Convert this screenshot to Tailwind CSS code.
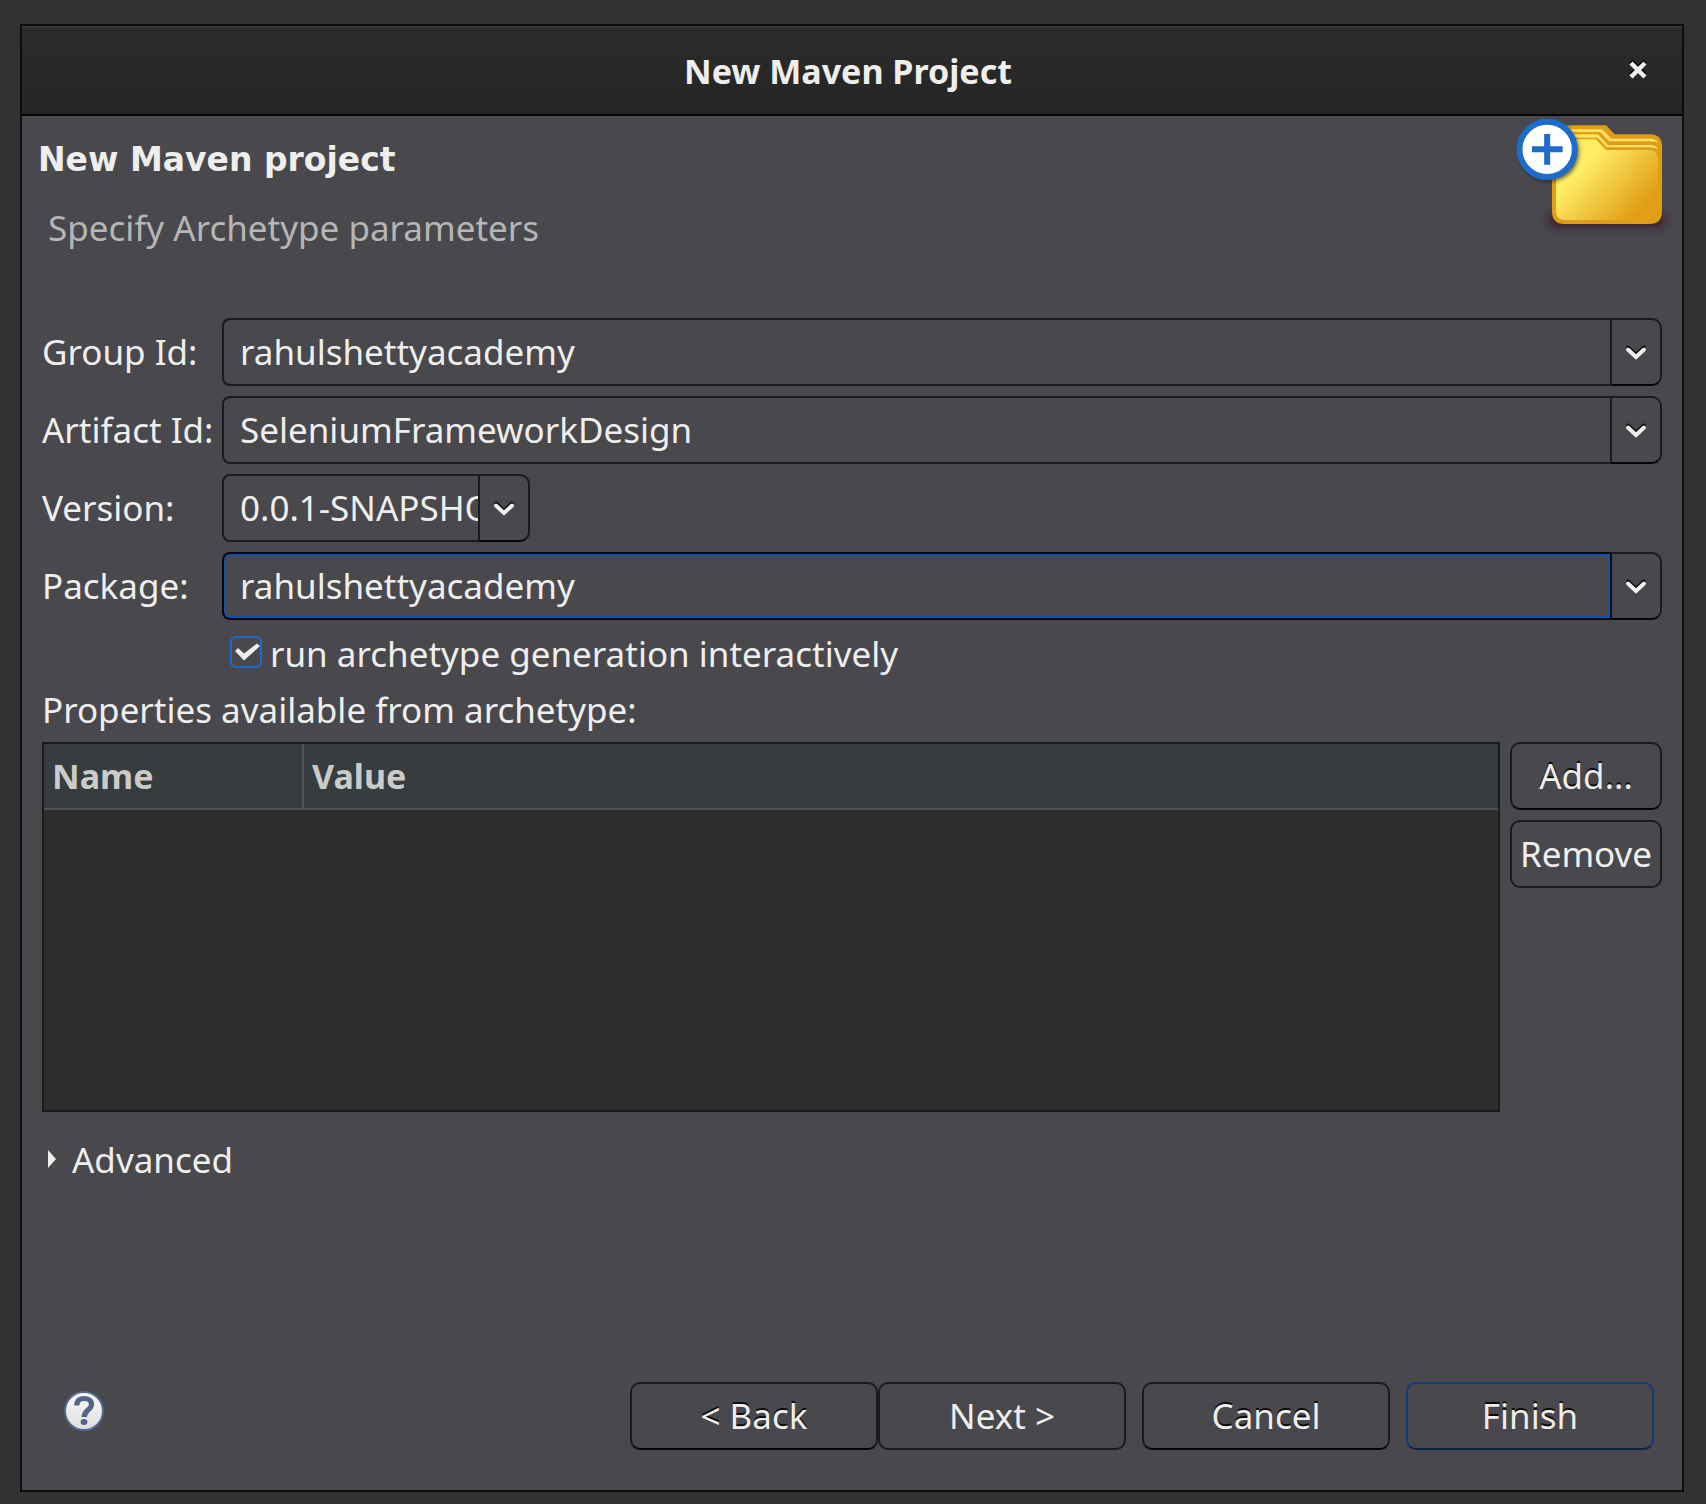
<!DOCTYPE html>
<html lang="en">
<head>
<meta charset="utf-8">
<meta name="viewport" content="width=device-width, initial-scale=1">
<title>New Maven Project</title>
<script src="https://cdn.jsdelivr.net/npm/@tailwindcss/browser@4"></script>
</head>
<body class="flex min-h-screen bg-[#323234] pt-6 pr-[22px] pb-3 pl-5 font-['Noto_Sans','Open_Sans',sans-serif] text-[35px] leading-12 text-[#eeeeec]">
<svg class="hidden" aria-hidden="true">
  <symbol id="chevron" viewBox="0 0 22 16">
    <path d="M3 3.5 11 11l8-7.500" fill="none" stroke="#0b0b0b" stroke-width="4" stroke-linecap="round" stroke-linejoin="miter"/>
    <path d="M3 5.500 11 13l8-7.500" fill="none" stroke="#eeeeec" stroke-width="4" stroke-linecap="round" stroke-linejoin="miter"/>
  </symbol>
</svg>
<main class="flex min-w-0 flex-1 flex-col border-2 border-[#0d0d0f] bg-[#49484c]">
  <header class="grid h-[90px] shrink-0 grid-cols-[1fr_auto_1fr] items-center border-t-2 border-b-2 border-t-[#373737] border-b-[#070707] bg-linear-to-b from-[#2c2c2c] to-[#252525] pr-8 pl-6">
    <span></span>
    <h1 class="text-[34px] leading-12 font-bold">New Maven Project</h1>
    <button type="button" aria-label="Close" class="flex size-6 items-center justify-center justify-self-end">
      <svg class="size-6" viewBox="0 0 24 24" fill="none" stroke-width="4.500" aria-hidden="true">
        <path d="m5 2 14 14M19 2 5 16" stroke="#050505"/>
        <path d="m5 4 14 14M19 4 5 18" stroke="#eeeeec"/>
      </svg>
    </button>
  </header>

  <section class="flex h-[202px] shrink-0 justify-between pt-6 pl-4">
    <div class="flex flex-col gap-6">
      <h2 class="font-['DejaVu_Sans',sans-serif] text-[33px] leading-10 font-bold">New Maven project</h2>
      <p class="pl-2.5 text-[#b6b6b6]">Specify Archetype parameters</p>
    </div>
    <svg class="-mt-6 h-[124px] w-[170px] shrink-0" viewBox="96 348 510 372" aria-hidden="true">
      <defs>
        <linearGradient id="front" x1="270" y1="430" x2="480" y2="630" gradientUnits="userSpaceOnUse">
          <stop offset="0" stop-color="#ffe95a"/><stop offset=".25" stop-color="#ffef68"/><stop offset=".55" stop-color="#f3cd45"/><stop offset="1" stop-color="#e29e18"/>
        </linearGradient>
        <filter id="soft" x="-30%" y="-80%" width="160%" height="260%"><feGaussianBlur stdDeviation="12"/></filter>
        <filter id="soft2" x="-30%" y="-30%" width="160%" height="160%"><feGaussianBlur stdDeviation="7"/></filter>
      </defs>
      <rect x="205" y="640" width="350" height="42" rx="20" fill="#3a1424" opacity=".8" filter="url(#soft)"/>
      <path d="M216 405q0-29 70-29h92l26 27h104q38 0 38 36v195q0 38-38 38H254q-38 0-38-38z" fill="#e29d17"/>
      <path d="M240 389h127l27 28h116q18 0 24 12-10-4-24-4H388l-28-28H240zM240 404h114l30 32h126q18 0 24 12-10-5-24-5H380l-28-29H240z" fill="#fce263" transform="translate(0 -1)"/>
      <path d="M228 418h119l31 32h128q28 0 28 28v156q0 26-28 26H256q-28 0-28-28z" fill="url(#front)"/>
      <circle cx="208" cy="456" r="88" fill="#18181c" opacity=".7" filter="url(#soft2)"/>
      <circle cx="201.500" cy="448" r="83" fill="#fff" stroke="#1d6ccb" stroke-width="18"/>
      <path d="M201.500 402v92M156 448h92" stroke="#1d6ccb" stroke-width="18"/>
    </svg>
  </section>

  <form class="flex flex-1 flex-col pr-5 pl-5">
    <div class="grid grid-cols-[auto_1fr] items-center gap-x-2.5 gap-y-2.5">
      <label for="group" class="w-[170px] whitespace-nowrap">Group Id:</label>
      <div class="flex h-[68px] min-w-0">
        <input id="group" type="text" value="rahulshettyacademy" class="min-w-0 flex-1 rounded-l-lg border-2 border-r-0 border-[#1b1b1b] bg-transparent px-4 outline-none">
        <button type="button" aria-label="Group Id history" class="flex w-[52px] items-center justify-center rounded-r-[10px] border-2 border-[#1b1b1b] border-b-[#050505]"><svg class="h-4 w-[22px]" aria-hidden="true"><use href="#chevron"/></svg></button>
      </div>

      <label for="artifact" class="w-[170px] whitespace-nowrap">Artifact Id:</label>
      <div class="flex h-[68px] min-w-0">
        <input id="artifact" type="text" value="SeleniumFrameworkDesign" class="min-w-0 flex-1 rounded-l-lg border-2 border-r-0 border-[#1b1b1b] bg-transparent px-4 outline-none">
        <button type="button" aria-label="Artifact Id history" class="flex w-[52px] items-center justify-center rounded-r-[10px] border-2 border-[#1b1b1b] border-b-[#050505]"><svg class="h-4 w-[22px]" aria-hidden="true"><use href="#chevron"/></svg></button>
      </div>

      <label for="version" class="w-[170px] whitespace-nowrap">Version:</label>
      <div class="flex h-[68px] w-[308px]">
        <input id="version" type="text" value="0.0.1-SNAPSHOT" class="min-w-0 flex-1 rounded-l-lg border-2 border-r-0 border-[#1b1b1b] bg-transparent pl-4 outline-none">
        <button type="button" aria-label="Version history" class="flex w-[52px] items-center justify-center rounded-r-[10px] border-2 border-[#1b1b1b] border-b-[#050505]"><svg class="h-4 w-[22px]" aria-hidden="true"><use href="#chevron"/></svg></button>
      </div>

      <label for="package" class="w-[170px] whitespace-nowrap">Package:</label>
      <div class="flex h-[68px] min-w-0">
        <input id="package" type="text" value="rahulshettyacademy" class="min-w-0 flex-1 rounded-l-lg border-2 border-r-0 border-[#030913] bg-transparent px-4 inset-ring-2 inset-ring-[#1552a0] outline-none">
        <button type="button" aria-label="Package history" class="flex w-[52px] items-center justify-center rounded-r-[10px] border-2 border-[#1b1b1b] border-b-[#050505] border-l-[#030913]"><svg class="h-4 w-[22px]" aria-hidden="true"><use href="#chevron"/></svg></button>
      </div>

      <label class="col-start-2 flex items-start gap-2 pl-2">
        <span class="grid pt-1.5">
          <input type="checkbox" checked class="col-start-1 row-start-1 size-8 appearance-none rounded-md border-2 border-[#1b6acb]">
          <svg class="pointer-events-none col-start-1 row-start-1 size-8" viewBox="0 0 32 32" aria-hidden="true">
            <path d="m5 15 3-3 6 5.500L27 7.500l3 2.500-16 14.500z" fill="#eeeeec"/>
          </svg>
        </span>
        <span>run archetype generation interactively</span>
      </label>
    </div>

    <p id="props" class="pt-2">Properties available from archetype:</p>

    <div class="flex gap-2.5 pt-2">
      <div class="h-[370px] min-w-0 flex-1 border-2 border-[#1b1b1b] bg-[#2e2e2e]">
        <table aria-labelledby="props" class="w-full table-fixed border-separate border-spacing-0 text-left text-[34px] leading-12">
          <thead>
            <tr class="h-[66px] bg-[#373c3e] text-[#cbcbc9]">
              <th scope="col" class="w-[260px] border-r-2 border-b-2 border-[#505351] px-2 font-bold">Name</th>
              <th scope="col" class="border-b-2 border-[#505351] px-2 font-bold">Value</th>
            </tr>
          </thead>
          <tbody></tbody>
        </table>
      </div>
      <div class="flex w-[152px] flex-col gap-2.5">
        <button type="button" class="h-[68px] rounded-[10px] border-2 border-[#1b1b1b] border-b-[#050505] text-shadow-[0_-2px_0_#0b0b0b]">Add...</button>
        <button type="button" class="h-[68px] rounded-[10px] border-2 border-[#1b1b1b]">Remove</button>
      </div>
    </div>

    <button type="button" aria-expanded="false" class="mt-6 flex items-center gap-4 self-start pl-1.5">
      <svg class="mb-0.5 h-[18px] w-2" viewBox="0 0 8 18" aria-hidden="true"><path d="M0 0 8 9 0 18z" fill="#eeeeec"/></svg>
      <span>Advanced</span>
    </button>

    <footer class="mt-auto flex items-center pr-2 pb-10 pl-[22px]">
      <button type="button" aria-label="Help" class="mr-auto mb-2.5">
        <svg class="size-10" viewBox="0 0 40 40" aria-hidden="true">
          <defs><linearGradient id="disc" x2="0" y2="1"><stop stop-color="#fafafa"/><stop offset="1" stop-color="#dedede"/></linearGradient></defs>
          <circle cx="20" cy="20" r="19" fill="url(#disc)" stroke="#536a90" stroke-width="2"/>
          <path d="M12.800 14.500C12.800 9.500 15.500 7.500 20 7.500s7.500 2.300 7.500 6c0 5.500-7.300 5-7.300 12.500" fill="none" stroke="#536588" stroke-width="5.200"/>
          <ellipse cx="20" cy="31" rx="3.400" ry="3" fill="#536588"/>
        </svg>
      </button>
      <div class="flex gap-4">
        <div class="flex">
          <button type="button" class="h-[68px] w-[248px] rounded-[10px] border-2 border-[#1b1b1b] border-b-[#050505] text-shadow-[0_-2px_0_#0b0b0b]">&lt; Back</button>
          <button type="button" class="h-[68px] w-[248px] rounded-[10px] border-2 border-[#1b1b1b]">Next &gt;</button>
        </div>
        <button type="button" class="h-[68px] w-[248px] rounded-[10px] border-2 border-[#1b1b1b] border-b-[#050505] text-shadow-[0_-2px_0_#0b0b0b]">Cancel</button>
        <button type="submit" class="h-[68px] w-[248px] rounded-[10px] border-2 border-[#103c78] border-b-[#0a2448] text-shadow-[0_-2px_0_#0b0b0b]">Finish</button>
      </div>
    </footer>
  </form>
</main>
</body>
</html>
